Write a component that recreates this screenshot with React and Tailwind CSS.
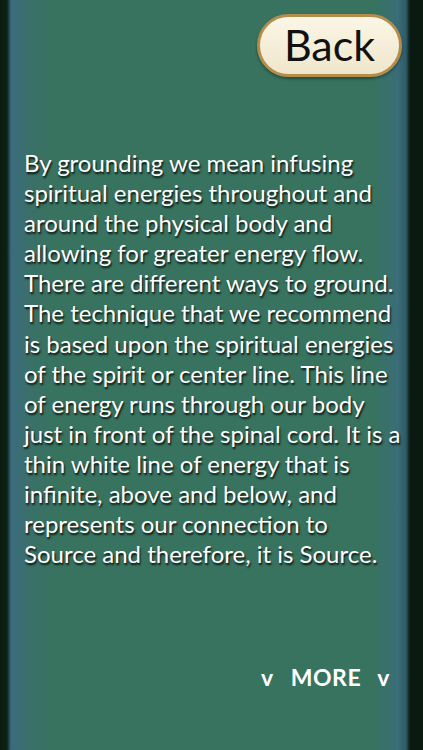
import React from "react";

const LINES = [
  "By grounding we mean infusing",
  "spiritual energies throughout and",
  "around the physical body and",
  "allowing for greater energy flow.",
  "There are different ways to ground.",
  "The technique that we recommend",
  "is based upon the spiritual energies",
  "of the spirit or center line. This line",
  "of energy runs through our body",
  "just in front of the spinal cord. It is a",
  "thin white line of energy that is",
  "infinite, above and below, and",
  "represents our connection to",
  "Source and therefore, it is Source.",
];

export default function App() {
  return (
    <div className="h-[750px] w-[423px] overflow-hidden bg-[linear-gradient(to_right,#0b1a10_0px,#0d2216_7px,#3a6b7e_11px,#3a7068_30px,#38735f_55px,#38735f_375px,#3a6d78_398px,#2f5a66_406px,#0b1a10_410px)] font-['Lato',sans-serif]">
      <div className="flex justify-end pr-[21px] pt-[14px]">
        <button className="flex h-[63px] w-[145px] items-center justify-center rounded-full border-[3px] border-[#b48d4c] bg-[linear-gradient(to_bottom,#fbf6e6,#efe6cb)] pb-[2px] text-[43px] leading-none text-[#111] shadow-[0_2px_3px_rgba(0,0,0,0.35)]">
          Back
        </button>
      </div>

      <div className="pl-[24px] pt-[71px] text-[24px] leading-[30.1px] text-white [text-shadow:1px_2px_2px_rgba(0,0,0,0.85)]">
        {LINES.map((l) => (
          <div key={l} className="whitespace-nowrap">
            {l}
          </div>
        ))}
      </div>

      <div className="mt-[91px] flex justify-end pr-[33px] text-[23px] font-bold tracking-wide text-white">
        <span>v</span>
        <span className="ml-[17px]">MORE</span>
        <span className="ml-[16px]">v</span>
      </div>
    </div>
  );
}
